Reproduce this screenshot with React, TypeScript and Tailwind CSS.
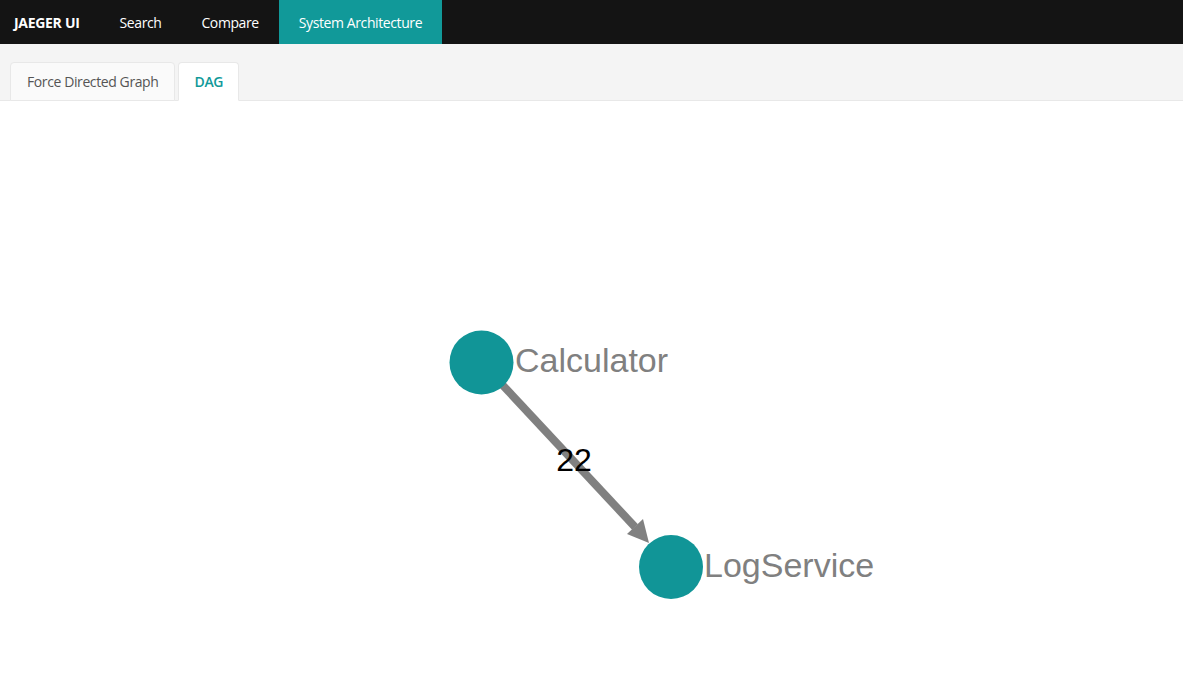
const NAV = ["Search", "Compare", "System Architecture"];

const Graph = () => (
  <svg
    width="1183"
    height="594"
    viewBox="0 101 1183 594"
    className="block"
    style={{ fontFamily: '"Liberation Sans", Arial, sans-serif' }}
  >
    <line x1="496" y1="378" x2="635" y2="527" stroke="#808080" strokeWidth="8" />
    <polygon points="649,543 627,534 643,519" fill="#808080" />
    <circle cx="481.5" cy="362.5" r="32" fill="#119597" />
    <circle cx="671" cy="567" r="32" fill="#119597" />
    <text x="515" y="372" fontSize="34" fill="#808080">
      Calculator
    </text>
    <text x="704" y="577" fontSize="34" fill="#808080">
      LogService
    </text>
    <text x="574" y="471" fontSize="32" fill="#000" textAnchor="middle">
      22
    </text>
  </svg>
);

export default function App() {
  return (
    <div
      className="w-[1183px] h-[695px] bg-white overflow-hidden flex flex-col"
      style={{ fontFamily: '"Open Sans", "Noto Sans", sans-serif' }}
    >
      <div className="h-[44px] bg-[#141414] flex items-stretch text-[14px] text-white">
        <div className="pl-[14px] pr-[20px] flex items-center font-bold tracking-[-0.3px]">JAEGER UI</div>
        {NAV.map((n) => (
          <div
            key={n}
            className={
              n === "System Architecture"
                ? "px-[20px] flex items-center bg-[#119999] tracking-[-0.4px]"
                : "px-[20px] flex items-center tracking-[-0.4px]"
            }
          >
            {n}
          </div>
        ))}
      </div>
      <div className="h-[57px] bg-[#f4f4f4] border-b border-[#e8e8e8] flex items-end pl-[10px] gap-[3px] text-[14px]">
        <div className="h-[39px] -mb-px px-[16px] flex items-center bg-[#fafafa] border border-[#e8e8e8] rounded-t-[4px] text-[#555] tracking-[-0.4px]">
          Force Directed Graph
        </div>
        <div className="h-[39px] -mb-px px-[15px] flex items-center bg-white border border-[#e8e8e8] border-b-white rounded-t-[4px] text-[#119999] font-semibold tracking-[-0.3px]">
          DAG
        </div>
      </div>
      <Graph />
    </div>
  );
}
